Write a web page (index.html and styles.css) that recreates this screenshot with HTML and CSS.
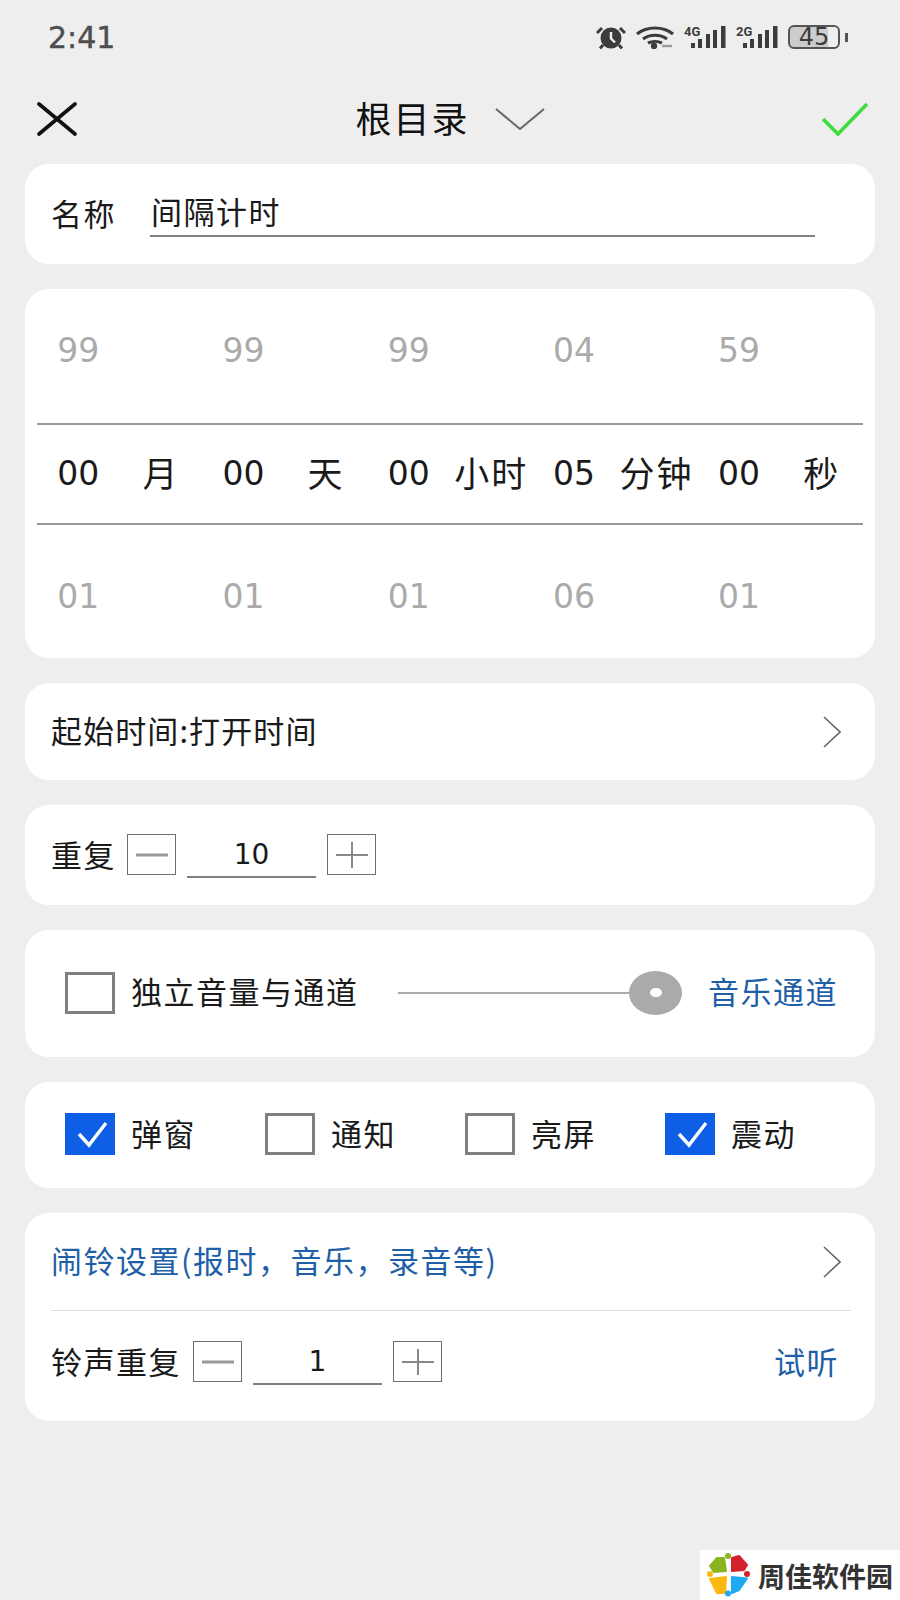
FILE: index.html
```html
<!DOCTYPE html>
<html lang="zh-CN">
<head>
  <meta charset="UTF-8">
  <meta name="viewport" content="width=device-width, initial-scale=1.0">
  <title>间隔计时</title>
  <link rel="stylesheet" href="styles.css">
</head>
<body>
  <div class="statusbar">
    <span class="clock">2:41</span>
    <div class="status-icons">
      <svg width="30" height="23" viewBox="0 0 30 23">
        <circle cx="15" cy="12" r="10.500" fill="#3c3c3c"/>
        <path d="M15 6v6.500l4 4" fill="none" stroke="#eee" stroke-width="2.400"/>
        <path d="M1 7l5-5M29 7l-5-5M7 19l-3 3.500M23 19l3 3.500" fill="none" stroke="#3c3c3c" stroke-width="3"/>
      </svg>
      <svg width="38" height="23" viewBox="0 0 38 23">
        <path d="M1 8c10-8 26-8 36 0M7 13c7-5 17-5 24 0M12 17c4-2 10-2 14 0" fill="none" stroke="#3c3c3c" stroke-width="3.200"/>
        <circle cx="18" cy="20" r="3.200" fill="#3c3c3c"/>
        <path d="M26 20h10" stroke="#999" stroke-width="2.400"/>
      </svg>
      <div class="signal">
        <span class="net">4G</span>
        <svg width="42" height="23" viewBox="0 0 42 23">
          <path d="M7 17h4v5h-4zM14 13h4v9h-4zM22 8h4v14h-4zM29 4h4v18h-4zM37 0h4.500v22h-4.500z" fill="#3c3c3c"/>
        </svg>
      </div>
      <div class="signal">
        <span class="net">2G</span>
        <svg width="42" height="23" viewBox="0 0 42 23">
          <path d="M7 17h4v5h-4zM14 13h4v9h-4zM22 8h4v14h-4zM29 4h4v18h-4zM37 0h4.500v22h-4.500z" fill="#3c3c3c"/>
        </svg>
      </div>
      <div class="battery">
        <div class="battery-body"><span>45</span></div>
        <div class="battery-tip"></div>
      </div>
    </div>
  </div>

  <div class="navbar">
    <svg class="nav-close" width="40" height="34" viewBox="0 0 40 34">
      <path d="M2 2l36 30M38 2L2 32" fill="none" stroke="#111" stroke-width="3.600" stroke-linecap="round"/>
    </svg>
    <div class="nav-title">
      <span class="nav-name">根目录</span>
      <svg width="50" height="22" viewBox="0 0 50 22">
        <path d="M1 1l24 20L49 1" fill="none" stroke="#666" stroke-width="2"/>
      </svg>
    </div>
    <svg class="nav-ok" width="46" height="33" viewBox="0 0 46 33">
      <path d="M1 16l15 15L45 1" fill="none" stroke="#3ddc3d" stroke-width="3.600"/>
    </svg>
  </div>

  <div class="content">
    <div class="card name-card">
      <span class="text name-label">名称</span>
      <div class="name-input"><span class="text">间隔计时</span></div>
    </div>

    <div class="card picker">
      <div class="picker-row dim top">
        <span>99</span><span></span><span>99</span><span></span><span>99</span><span></span><span>04</span><span></span><span>59</span><span></span>
      </div>
      <div class="picker-row current">
        <span>00</span><span class="unit">月</span><span>00</span><span class="unit">天</span><span>00</span><span class="unit">小时</span><span>05</span><span class="unit">分钟</span><span>00</span><span class="unit">秒</span>
      </div>
      <div class="picker-row dim bottom">
        <span>01</span><span></span><span>01</span><span></span><span>01</span><span></span><span>06</span><span></span><span>01</span><span></span>
      </div>
    </div>

    <div class="card link-card">
      <span class="text">起始时间:打开时间</span>
      <svg class="chevron" width="18" height="32" viewBox="0 0 18 32">
        <path d="M1 1l16 15L1 31" fill="none" stroke="#666" stroke-width="1.600"/>
      </svg>
    </div>

    <div class="card repeat-card">
      <span class="text">重复</span>
      <div class="stepper">
        <div class="step-btn"><svg width="32" height="26" viewBox="0 0 32 26"><path d="M0 13h32" stroke="#999" stroke-width="3"/></svg></div>
        <div class="step-value">10</div>
        <div class="step-btn"><svg width="32" height="26" viewBox="0 0 32 26"><path d="M0 13h32M16 0v26" stroke="#888" stroke-width="2"/></svg></div>
      </div>
    </div>

    <div class="card volume-card">
      <div class="check"></div>
      <span class="text volume-label">独立音量与通道</span>
      <div class="slider">
        <div class="slider-line"></div>
        <div class="slider-thumb"><div class="slider-hole"></div></div>
      </div>
      <span class="text blue">音乐通道</span>
    </div>

    <div class="card options-card">
      <div class="option">
        <div class="check on"><svg width="36" height="28" viewBox="0 0 36 28"><path d="M7 14l10 11L34 3" fill="none" stroke="#fff" stroke-width="3.400"/></svg></div>
        <span class="text">弹窗</span>
      </div>
      <div class="option"><div class="check"></div><span class="text">通知</span></div>
      <div class="option"><div class="check"></div><span class="text">亮屏</span></div>
      <div class="option">
        <div class="check on"><svg width="36" height="28" viewBox="0 0 36 28"><path d="M7 14l10 11L34 3" fill="none" stroke="#fff" stroke-width="3.400"/></svg></div>
        <span class="text">震动</span>
      </div>
    </div>

    <div class="card alarm-card">
      <div class="alarm-link">
        <span class="text blue">闹铃设置(报时，音乐，录音等)</span>
        <svg class="chevron" width="18" height="32" viewBox="0 0 18 32">
          <path d="M1 1l16 15L1 31" fill="none" stroke="#666" stroke-width="1.600"/>
        </svg>
      </div>
      <div class="alarm-repeat">
        <span class="text">铃声重复</span>
        <div class="stepper">
          <div class="step-btn"><svg width="32" height="26" viewBox="0 0 32 26"><path d="M0 13h32" stroke="#999" stroke-width="3"/></svg></div>
          <div class="step-value">1</div>
          <div class="step-btn"><svg width="32" height="26" viewBox="0 0 32 26"><path d="M0 13h32M16 0v26" stroke="#888" stroke-width="2"/></svg></div>
        </div>
        <span class="text blue listen">试听</span>
      </div>
    </div>
  </div>

  <div class="watermark">
    <svg width="44" height="44" viewBox="0 0 44 44">
      <g stroke-width="2" stroke-linejoin="round">
        <path d="M3 13l7-8h7l2 13-12 1z" fill="#8ab51f" stroke="#8ab51f"/>
        <path d="M25 5l7-2 8 9-3 5-12 1z" fill="#d3222c" stroke="#d3222c"/>
        <path d="M3 26l16-2-1 16h-8z" fill="#fbb80f" stroke="#fbb80f"/>
        <path d="M25 24l15 1.500-8 11.500-7 3z" fill="#1eaaf3" stroke="#1eaaf3"/>
      </g>
      <circle cx="21" cy="3" r="3" fill="#8ab51f"/>
      <circle cx="40" cy="21" r="3" fill="#d3222c"/>
      <circle cx="3" cy="21" r="3" fill="#fbb80f"/>
      <circle cx="21" cy="40.500" r="3" fill="#1eaaf3"/>
    </svg>
    <span>周佳软件园</span>
  </div>
</body>
</html>
```

FILE: styles.css
```css
* {
  box-sizing: border-box;
}

body {
  margin: 0;
  width: 900px;
  min-height: 1600px;
  background-color: #eeeeee;
  color: #1a1a1a;
  font-family: "Noto Sans CJK SC", "Noto Sans", sans-serif;
}

.statusbar {
  display: flex;
  justify-content: space-between;
  align-items: center;
  height: 74px;
  padding: 0 52px 0 48px;
}

.clock {
  font-family: "DejaVu Sans", sans-serif;
  font-size: 30px;
  color: #4d4d4d;
  -webkit-text-stroke: 0.4px #4d4d4d;
}

.status-icons {
  display: flex;
  align-items: center;
  gap: 10px;
}

.signal {
  position: relative;
  display: flex;
}

.net {
  position: absolute;
  left: 0;
  top: 0;
  font-family: "Roboto", sans-serif;
  font-size: 13px;
  font-weight: 700;
  line-height: 11px;
  color: #3c3c3c;
}

.battery {
  display: flex;
  align-items: center;
  gap: 5px;
}

.battery-body {
  display: flex;
  align-items: center;
  justify-content: center;
  width: 52px;
  height: 24px;
  border: 2px solid #555;
  border-radius: 6px;
  background: linear-gradient(to right, #ccc 80%, #eee 80%);
  font-family: "DejaVu Sans", sans-serif;
  font-size: 24px;
  line-height: 1;
  color: #3c3c3c;
}

.battery-tip {
  width: 3px;
  height: 9px;
  background-color: #555;
}

.navbar {
  display: grid;
  grid-template-columns: 1fr auto 1fr;
  align-items: center;
  height: 90px;
  padding: 0 32px 0 37px;
}

.nav-title {
  display: flex;
  align-items: center;
  gap: 25px;
  margin-left: -5px;
  font-size: 36px;
  letter-spacing: 2px;
  color: #111;
}

.nav-name {
  padding-bottom: 5px;
}

.nav-ok {
  justify-self: end;
}

.content {
  display: flex;
  flex-direction: column;
  gap: 25px;
  padding: 0 25px;
}

.card {
  background-color: #fff;
  border-radius: 24px;
}

.text {
  padding-bottom: 4px;
  font-size: 31px;
  letter-spacing: 1.500px;
  white-space: nowrap;
}

.blue {
  color: #1f5fa8;
}

.name-card {
  display: flex;
  align-items: center;
  height: 100px;
  padding: 0 60px 0 26px;
}

.name-label {
  width: 99px;
}

.name-input {
  flex: 1;
  height: 46px;
  padding-left: 1px;
  border-bottom: 2px solid #808080;
  line-height: 1.3;
}

.picker {
  display: flex;
  flex-direction: column;
  height: 369px;
  padding: 0 12px;
}

.picker-row {
  display: grid;
  grid-template-columns: repeat(10, 1fr);
  align-items: center;
  text-align: center;
  font-family: "DejaVu Sans", sans-serif;
  font-size: 33px;
}

.dim {
  flex: 1;
  color: #aaa;
}

.dim.top {
  padding-bottom: 10px;
}

.dim.bottom {
  padding-top: 10px;
}

.current {
  height: 102px;
  border-top: 2px solid #999;
  border-bottom: 2px solid #999;
}

.unit {
  padding-bottom: 4px;
  font-family: "Noto Sans CJK SC", sans-serif;
  font-size: 35px;
  letter-spacing: 2px;
}

.link-card {
  display: flex;
  justify-content: space-between;
  align-items: center;
  height: 97px;
  padding: 0 34px 0 26px;
}

.link-card .text {
  letter-spacing: 1.100px;
}

.repeat-card {
  display: flex;
  align-items: center;
  gap: 11px;
  height: 100px;
  padding-left: 26px;
}

.stepper {
  display: flex;
  align-items: flex-start;
  gap: 11px;
  margin-top: 2px;
}

.step-btn {
  display: flex;
  justify-content: center;
  align-items: center;
  width: 49px;
  height: 41px;
  border: 1px solid #707070;
}

.step-value {
  width: 129px;
  height: 44px;
  border-bottom: 2px solid #808080;
  text-align: center;
  line-height: 42px;
  font-family: "DejaVu Sans", sans-serif;
  font-size: 28px;
}

.check {
  display: flex;
  justify-content: center;
  align-items: center;
  flex-shrink: 0;
  width: 50px;
  height: 42px;
  border: 3.500px solid #808080;
}

.check.on {
  border: none;
  background-color: #0f5fe6;
}

.volume-card {
  display: flex;
  align-items: center;
  height: 127px;
  padding: 0 37px 2px 40px;
}

.volume-label {
  margin-left: 16px;
}

.slider {
  position: relative;
  display: flex;
  align-items: center;
  width: 285px;
  height: 44px;
  margin: 0 26px 0 39px;
}

.slider-line {
  width: 100%;
  height: 2px;
  background-color: #aaa;
}

.slider-thumb {
  position: absolute;
  right: 0;
  top: 0;
  display: flex;
  justify-content: center;
  align-items: center;
  width: 53px;
  height: 44px;
  border-radius: 50%;
  background-color: #aaa;
}

.slider-hole {
  width: 12px;
  height: 9px;
  border-radius: 50%;
  background-color: #fff;
}

.options-card {
  display: grid;
  grid-template-columns: repeat(4, 200px);
  align-items: center;
  height: 106px;
  padding: 0 0 2px 40px;
}

.option {
  display: flex;
  align-items: center;
  gap: 16px;
}

.alarm-card {
  display: flex;
  flex-direction: column;
  height: 208px;
  padding: 0 24px 0 26px;
}

.alarm-link {
  display: flex;
  justify-content: space-between;
  align-items: center;
  height: 98px;
  padding-right: 10px;
  border-bottom: 1px solid #ddd;
}

.alarm-repeat {
  display: flex;
  align-items: center;
  gap: 12px;
  flex: 1;
  padding-bottom: 8px;
}

.listen {
  margin-left: auto;
  margin-right: 12px;
}

.watermark {
  position: fixed;
  right: 0;
  bottom: 0;
  display: flex;
  align-items: center;
  gap: 7px;
  width: 200px;
  height: 50px;
  padding-left: 7px;
  background-color: #fff;
  font-size: 27px;
  font-weight: 700;
  color: #333;
  white-space: nowrap;
}
```
